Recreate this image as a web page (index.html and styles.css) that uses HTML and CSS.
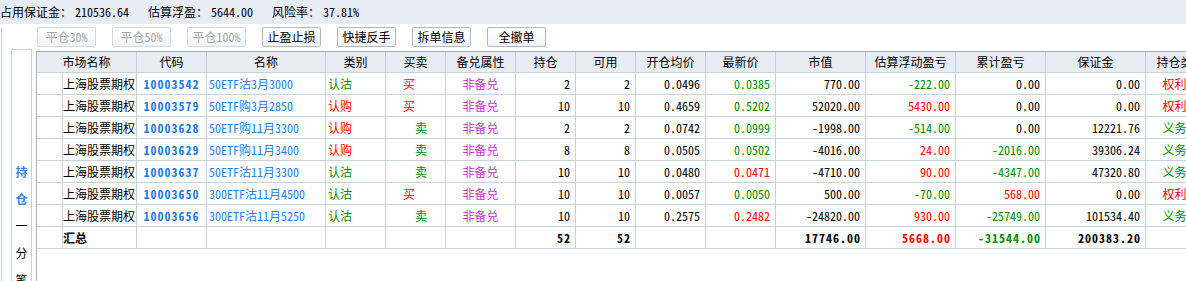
FILE: index.html
```html
<!DOCTYPE html>
<html lang="zh-CN">
<head>
<meta charset="utf-8">
<link rel="stylesheet" href="styles.css">
</head>
<body>
<div class="topbar">
  <span class="stat"><span class="lbl">占用保证金：</span><span class="val">210536.64</span></span>
  <span class="stat"><span class="lbl">估算浮盈：</span><span class="val">5644.00</span></span>
  <span class="stat"><span class="lbl">风险率：</span><span class="val">37.81%</span></span>
</div>
<div class="main">
  <div class="edge"></div>
  <div class="tab">
    <span class="tch hi">持</span><span class="tch hi">仓</span><span class="tch">一</span><span class="tch">分</span><span class="tch">笔</span>
  </div>
  <div class="content">
    <div class="toolbar">
      <button class="btn" disabled>平仓30%</button>
      <button class="btn" disabled>平仓50%</button>
      <button class="btn" disabled>平仓100%</button>
      <button class="btn">止盈止损</button>
      <button class="btn">快捷反手</button>
      <button class="btn">拆单信息</button>
      <button class="btn">全撤单</button>
    </div>
    <div class="panel">
      <div class="grid">
        <div class="h span2">市场名称</div><div class="h">代码</div><div class="h">名称</div><div class="h">类别</div><div class="h">买卖</div><div class="h">备兑属性</div><div class="h">持仓</div><div class="h">可用</div><div class="h">开仓均价</div><div class="h">最新价</div><div class="h">市值</div><div class="h">估算浮动盈亏</div><div class="h">累计盈亏</div><div class="h">保证金</div><div class="h">持仓类型</div>

        <div class="c"></div><div class="c mkt">上海股票期权</div><div class="c code">10003542</div><div class="c name">50ETF沽3月3000</div><div class="c kind g">认沽</div><div class="c buy">买</div><div class="c cov">非备兑</div><div class="c num">2</div><div class="c num">2</div><div class="c num">0.0496</div><div class="c num g">0.0385</div><div class="c num">770.00</div><div class="c num g">-222.00</div><div class="c num">0.00</div><div class="c num">0.00</div><div class="c pos rd">权利仓</div>

        <div class="c"></div><div class="c mkt">上海股票期权</div><div class="c code">10003579</div><div class="c name">50ETF购3月2850</div><div class="c kind rd">认购</div><div class="c buy">买</div><div class="c cov">非备兑</div><div class="c num">10</div><div class="c num">10</div><div class="c num">0.4659</div><div class="c num g">0.5202</div><div class="c num">52020.00</div><div class="c num rd">5430.00</div><div class="c num">0.00</div><div class="c num">0.00</div><div class="c pos rd">权利仓</div>

        <div class="c"></div><div class="c mkt">上海股票期权</div><div class="c code">10003628</div><div class="c name">50ETF购11月3300</div><div class="c kind rd">认购</div><div class="c sell">卖</div><div class="c cov">非备兑</div><div class="c num">2</div><div class="c num">2</div><div class="c num">0.0742</div><div class="c num g">0.0999</div><div class="c num">-1998.00</div><div class="c num g">-514.00</div><div class="c num">0.00</div><div class="c num">12221.76</div><div class="c pos g">义务仓</div>

        <div class="c"></div><div class="c mkt">上海股票期权</div><div class="c code">10003629</div><div class="c name">50ETF购11月3400</div><div class="c kind rd">认购</div><div class="c sell">卖</div><div class="c cov">非备兑</div><div class="c num">8</div><div class="c num">8</div><div class="c num">0.0505</div><div class="c num g">0.0502</div><div class="c num">-4016.00</div><div class="c num rd">24.00</div><div class="c num g">-2016.00</div><div class="c num">39306.24</div><div class="c pos g">义务仓</div>

        <div class="c"></div><div class="c mkt">上海股票期权</div><div class="c code">10003637</div><div class="c name">50ETF沽11月3300</div><div class="c kind g">认沽</div><div class="c sell">卖</div><div class="c cov">非备兑</div><div class="c num">10</div><div class="c num">10</div><div class="c num">0.0480</div><div class="c num rd">0.0471</div><div class="c num">-4710.00</div><div class="c num rd">90.00</div><div class="c num g">-4347.00</div><div class="c num">47320.80</div><div class="c pos g">义务仓</div>

        <div class="c"></div><div class="c mkt">上海股票期权</div><div class="c code">10003650</div><div class="c name">300ETF沽11月4500</div><div class="c kind g">认沽</div><div class="c buy">买</div><div class="c cov">非备兑</div><div class="c num">10</div><div class="c num">10</div><div class="c num">0.0057</div><div class="c num g">0.0050</div><div class="c num">500.00</div><div class="c num g">-70.00</div><div class="c num rd">568.00</div><div class="c num">0.00</div><div class="c pos rd">权利仓</div>

        <div class="c"></div><div class="c mkt">上海股票期权</div><div class="c code">10003656</div><div class="c name">300ETF沽11月5250</div><div class="c kind g">认沽</div><div class="c sell">卖</div><div class="c cov">非备兑</div><div class="c num">10</div><div class="c num">10</div><div class="c num">0.2575</div><div class="c num rd">0.2482</div><div class="c num">-24820.00</div><div class="c num rd">930.00</div><div class="c num g">-25749.00</div><div class="c num">101534.40</div><div class="c pos g">义务仓</div>

        <div class="c"></div><div class="c mkt b">汇总</div><div class="c"></div><div class="c"></div><div class="c"></div><div class="c"></div><div class="c"></div><div class="c num b">52</div><div class="c num b">52</div><div class="c"></div><div class="c"></div><div class="c num b">17746.00</div><div class="c num b rd">5668.00</div><div class="c num b g">-31544.00</div><div class="c num b">200383.20</div><div class="c"></div>
      </div>
    </div>
  </div>
</div>
</body>
</html>
```

FILE: styles.css
```css
* { box-sizing: border-box; }
html, body {
  margin: 0;
  padding: 0;
}
body {
  width: 1186px;
  height: 281px;
  overflow: hidden;
  background: #fff;
  color: #000;
  font-family: "Noto Sans CJK SC", "Noto Sans", sans-serif;
  font-size: 12px;
  font-feature-settings: "hwid";
}

.topbar {
  height: 24px;
  background: #e8edf5;
  display: flex;
  align-items: center;
  gap: 19px;
  line-height: 24px;
  white-space: nowrap;
}
.lbl { font-feature-settings: normal; }
.val { margin-left: 3px; }

.main {
  display: flex;
  height: 257px;
}
.edge {
  width: 1px;
  margin-left: 1px;
  margin-top: 4px;
  background: #c4ccd6;
}
.tab {
  width: 21px;
  margin-left: 9px;
  margin-top: 25px;
  border: 1px solid #c8d0da;
  border-bottom: none;
  display: flex;
  flex-direction: column;
  align-items: center;
  padding-top: 108px;
}
.tch {
  line-height: 27px;
  height: 27px;
}
.tch.hi {
  color: #2f86e8;
  font-weight: bold;
}

.content {
  margin-left: 4px;
  flex: 1;
  display: flex;
  flex-direction: column;
  min-width: 0;
}
.toolbar {
  display: flex;
  gap: 16px;
  padding: 3px 0 4px 1px;
}
.btn {
  width: 59px;
  height: 20px;
  padding: 0;
  font: inherit;
  font-feature-settings: "hwid";
  color: #000;
  background: linear-gradient(#ffffff, #f1f4f8);
  border: 1px solid #aeb9c7;
  border-radius: 2px;
  line-height: 18px;
  white-space: nowrap;
}
.btn:disabled {
  color: #a8a8a8;
  border-color: #d2d8e0;
}

.panel {
  flex: 1;
  border-left: 1px solid #a4adb9;
  border-top: 1px solid #a4adb9;
}
.grid {
  display: grid;
  width: 1179px;
  grid-template-columns: 26px 74px 70px 119px 60px 60px 70px 60px 60px 70px 70px 90px 90px 90px 100px 70px;
  grid-template-rows: 21px repeat(8, 22px);
}
.h, .c {
  border-right: 1px solid #c8d0da;
  border-bottom: 1px solid #c8d0da;
  white-space: nowrap;
  overflow: hidden;
}
.h {
  background: #e8edf4;
  text-align: center;
  line-height: 20px;
}
.span2 { grid-column: span 2; }
.c { line-height: 21px; }

.mkt { padding-left: 0; }
.code {
  text-align: center;
  color: #1f7ae0;
  font-weight: bold;
  letter-spacing: 1px;
}
.name {
  color: #2a7fe0;
  padding-left: 2px;
}
.kind { padding-left: 2px; }
.buy { padding-left: 17px; color: #ff0000; }
.sell { padding-left: 29px; color: #008c00; }
.cov { text-align: center; color: #c03cc0; }
.num { text-align: right; padding-right: 5px; }
.pos { text-align: center; }
.b { font-weight: bold; }
.num.b { letter-spacing: 1px; padding-right: 4px; }

.g { color: #008c00; }
.rd { color: #ff0000; }
```
